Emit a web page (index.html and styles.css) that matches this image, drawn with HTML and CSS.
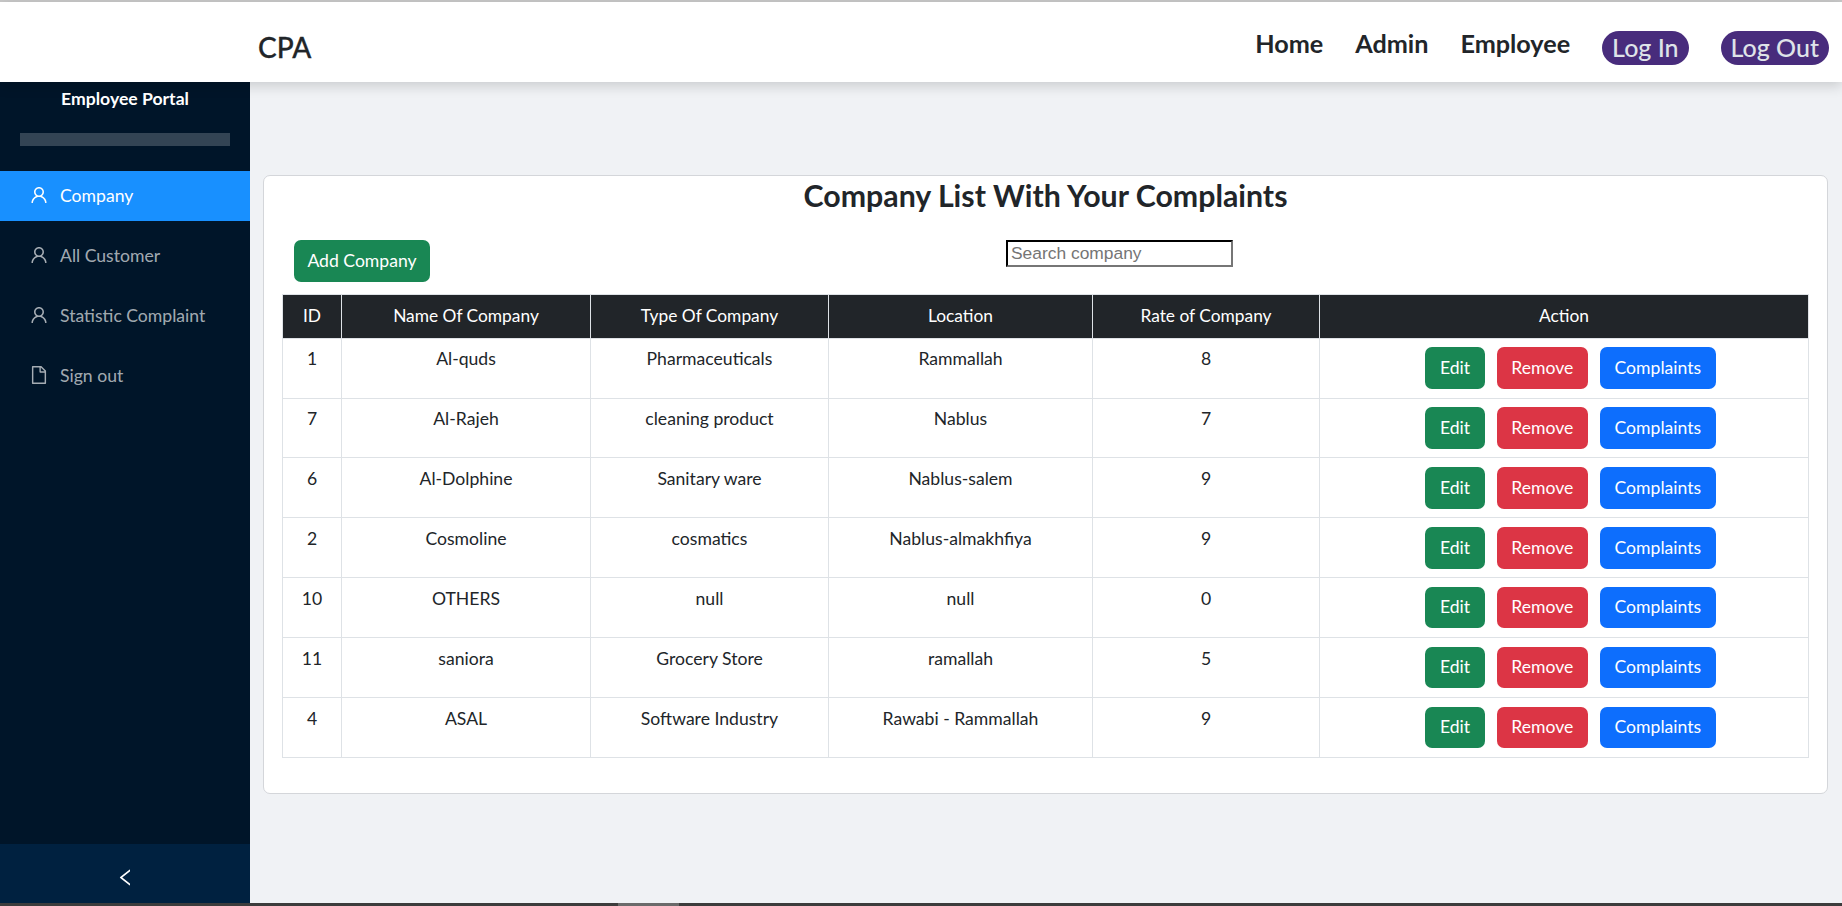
FILE: index.html
```html
<!DOCTYPE html>
<html lang="en">
<head>
<meta charset="utf-8">
<title>CPA</title>
<link rel="stylesheet" href="styles.css">
</head>
<body>
<div class="page">
  <header class="topbar">
    <span class="brand">CPA</span>
    <nav class="nav">
      <a class="nav-link">Home</a>
      <a class="nav-link">Admin</a>
      <a class="nav-link">Employee</a>
      <a class="nav-pill">Log In</a>
      <a class="nav-pill">Log Out</a>
    </nav>
  </header>
  <div class="body">
    <aside class="sider">
      <div class="sider-title">Employee Portal</div>
      <div class="sider-bar"></div>
      <ul class="menu">
        <li class="menu-item active"><svg class="menu-icon" viewBox="64 64 896 896"><path d="M858.5 763.6a374 374 0 0 0-80.6-119.5 375.63 375.63 0 0 0-119.5-80.6c-.4-.2-.8-.3-1.2-.5C719.5 518 760 444.7 760 362c0-137-111-248-248-248S264 225 264 362c0 82.7 40.5 156 102.8 201.1-.4.2-.8.3-1.2.5-44.8 18.9-85 46-119.5 80.6a375.63 375.63 0 0 0-80.6 119.5A371.7 371.7 0 0 0 136 901.8a8 8 0 0 0 8 8.2h60c4.4 0 7.9-3.5 8-7.8 2-77.2 33-149.5 87.8-204.3 56.7-56.7 132-87.9 212.2-87.9s155.5 31.2 212.2 87.9C779 752.7 810 825 812 902.2c.1 4.4 3.6 7.8 8 7.8h60a8 8 0 0 0 8-8.2c-1-47.8-10.9-94.3-29.5-138.2zM512 534c-45.9 0-89.1-17.9-121.6-50.4S340 407.9 340 362c0-45.9 17.9-89.1 50.4-121.6S466.1 190 512 190s89.1 17.9 121.6 50.4S684 316.1 684 362c0 45.9-17.9 89.1-50.4 121.6S557.9 534 512 534z"/></svg><span>Company</span></li>
        <li class="menu-item"><svg class="menu-icon" viewBox="64 64 896 896"><path d="M858.5 763.6a374 374 0 0 0-80.6-119.5 375.63 375.63 0 0 0-119.5-80.6c-.4-.2-.8-.3-1.2-.5C719.5 518 760 444.7 760 362c0-137-111-248-248-248S264 225 264 362c0 82.7 40.5 156 102.8 201.1-.4.2-.8.3-1.2.5-44.8 18.9-85 46-119.5 80.6a375.63 375.63 0 0 0-80.6 119.5A371.7 371.7 0 0 0 136 901.8a8 8 0 0 0 8 8.2h60c4.4 0 7.9-3.5 8-7.8 2-77.2 33-149.5 87.8-204.3 56.7-56.7 132-87.9 212.2-87.9s155.5 31.2 212.2 87.9C779 752.7 810 825 812 902.2c.1 4.4 3.6 7.8 8 7.8h60a8 8 0 0 0 8-8.2c-1-47.8-10.9-94.3-29.5-138.2zM512 534c-45.9 0-89.1-17.9-121.6-50.4S340 407.9 340 362c0-45.9 17.9-89.1 50.4-121.6S466.1 190 512 190s89.1 17.9 121.6 50.4S684 316.1 684 362c0 45.9-17.9 89.1-50.4 121.6S557.9 534 512 534z"/></svg><span>All Customer</span></li>
        <li class="menu-item"><svg class="menu-icon" viewBox="64 64 896 896"><path d="M858.5 763.6a374 374 0 0 0-80.6-119.5 375.63 375.63 0 0 0-119.5-80.6c-.4-.2-.8-.3-1.2-.5C719.5 518 760 444.7 760 362c0-137-111-248-248-248S264 225 264 362c0 82.7 40.5 156 102.8 201.1-.4.2-.8.3-1.2.5-44.8 18.9-85 46-119.5 80.6a375.63 375.63 0 0 0-80.6 119.5A371.7 371.7 0 0 0 136 901.8a8 8 0 0 0 8 8.2h60c4.4 0 7.9-3.5 8-7.8 2-77.2 33-149.5 87.8-204.3 56.7-56.7 132-87.9 212.2-87.9s155.5 31.2 212.2 87.9C779 752.7 810 825 812 902.2c.1 4.4 3.6 7.8 8 7.8h60a8 8 0 0 0 8-8.2c-1-47.8-10.9-94.3-29.5-138.2zM512 534c-45.9 0-89.1-17.9-121.6-50.4S340 407.9 340 362c0-45.9 17.9-89.1 50.4-121.6S466.1 190 512 190s89.1 17.9 121.6 50.4S684 316.1 684 362c0 45.9-17.9 89.1-50.4 121.6S557.9 534 512 534z"/></svg><span>Statistic Complaint</span></li>
        <li class="menu-item"><svg class="menu-icon" viewBox="64 64 896 896"><path d="M854.6 288.6L639.4 73.4c-6-6-14.1-9.4-22.6-9.4H192c-17.7 0-32 14.3-32 32v832c0 17.7 14.3 32 32 32h640c17.7 0 32-14.3 32-32V311.3c0-8.5-3.4-16.7-9.4-22.7zM790.2 326H602V137.8L790.2 326zm1.8 562H232V136h302v216a42 42 0 0 0 42 42h216v494z"/></svg><span>Sign out</span></li>
      </ul>
      <div class="sider-trigger"><svg class="trigger-icon" viewBox="64 64 896 896"><path d="M724 218.3V141c0-6.7-7.7-10.4-12.9-6.3L260.3 486.8a31.86 31.86 0 0 0 0 50.3l450.8 352.1c5.3 4.1 12.9.4 12.9-6.3v-77.3c0-4.9-2.3-9.6-6.1-12.6l-360-281 360-281.1c3.8-3 6.1-7.7 6.1-12.6z"/></svg></div>
    </aside>
    <main class="content">
      <section class="card">
        <h3 class="card-title">Company List With Your Complaints</h3>
        <div class="toolbar">
          <button class="btn btn-green btn-add">Add Company</button>
          <input class="search" type="text" placeholder="Search company">
        </div>
        <table class="table">
          <colgroup>
            <col class="c-id"><col class="c-name"><col class="c-type"><col class="c-loc"><col class="c-rate"><col class="c-act">
          </colgroup>
          <thead>
            <tr><th>ID</th><th>Name Of Company</th><th>Type Of Company</th><th>Location</th><th>Rate of Company</th><th>Action</th></tr>
          </thead>
          <tbody>
            <tr><td>1</td><td>Al-quds</td><td>Pharmaceuticals</td><td>Rammallah</td><td>8</td><td><div class="actions"><button class="btn btn-green">Edit</button><button class="btn btn-red">Remove</button><button class="btn btn-blue">Complaints</button></div></td></tr>
            <tr><td>7</td><td>Al-Rajeh</td><td>cleaning product</td><td>Nablus</td><td>7</td><td><div class="actions"><button class="btn btn-green">Edit</button><button class="btn btn-red">Remove</button><button class="btn btn-blue">Complaints</button></div></td></tr>
            <tr><td>6</td><td>Al-Dolphine</td><td>Sanitary ware</td><td>Nablus-salem</td><td>9</td><td><div class="actions"><button class="btn btn-green">Edit</button><button class="btn btn-red">Remove</button><button class="btn btn-blue">Complaints</button></div></td></tr>
            <tr><td>2</td><td>Cosmoline</td><td>cosmatics</td><td>Nablus-almakhfiya</td><td>9</td><td><div class="actions"><button class="btn btn-green">Edit</button><button class="btn btn-red">Remove</button><button class="btn btn-blue">Complaints</button></div></td></tr>
            <tr><td>10</td><td>OTHERS</td><td>null</td><td>null</td><td>0</td><td><div class="actions"><button class="btn btn-green">Edit</button><button class="btn btn-red">Remove</button><button class="btn btn-blue">Complaints</button></div></td></tr>
            <tr><td>11</td><td>saniora</td><td>Grocery Store</td><td>ramallah</td><td>5</td><td><div class="actions"><button class="btn btn-green">Edit</button><button class="btn btn-red">Remove</button><button class="btn btn-blue">Complaints</button></div></td></tr>
            <tr><td>4</td><td>ASAL</td><td>Software Industry</td><td>Rawabi - Rammallah</td><td>9</td><td><div class="actions"><button class="btn btn-green">Edit</button><button class="btn btn-red">Remove</button><button class="btn btn-blue">Complaints</button></div></td></tr>
          </tbody>
        </table>
      </section>
    </main>
  </div>
  <div class="strip"><div class="strip-thumb"></div></div>
</div>
</body>
</html>
```

FILE: styles.css
```css
* { box-sizing: border-box; }
html, body { margin: 0; height: 100%; }
body { font-family: Lato, "Noto Sans", sans-serif; font-size: 17.6px; color: #212529; background: #f0f2f5; overflow: hidden; }
.page { display: flex; flex-direction: column; height: 906px; border-top: 2px solid #c8c8c8; }
.topbar { position: relative; z-index: 2; flex: 0 0 80px; height: 80px; background: #fff; box-shadow: 0 4px 12px rgba(0,0,0,.16); display: flex; align-items: center; padding: 0 13px 0 258px; }
.brand { font-size: 28px; font-weight: 500; line-height: 1; margin-top: 10px; -webkit-text-stroke: .3px #212529; }
.nav { margin-left: auto; display: flex; align-items: center; gap: 32px; }
.nav-link { font-size: 25.2px; font-weight: 700; color: #212529; margin-top: 2px; }
.nav-pill { font-size: 25px; font-weight: 500; line-height: 32px; height: 34px; padding: 0 10px; border-radius: 17px; background: #482c7c; color: #dfe3e8; margin-top: 12px; }
.body { flex: 1; display: flex; min-height: 0; }
.sider { flex: 0 0 250px; background: #001529; display: flex; flex-direction: column; }
.sider-title { font-size: 17.6px; font-weight: 700; color: #fff; text-align: center; line-height: 24px; padding-top: 5px; }
.sider-bar { height: 13px; margin: 22px 20px 25px; background: #334454; }
.menu { list-style: none; margin: 0; padding: 0; flex: 1; }
.menu-item { height: 50px; margin-bottom: 10px; display: flex; align-items: center; padding: 0 0 2px 30px; gap: 12px; color: rgba(255,255,255,.65); font-size: 17.6px; }
.menu-item.active { background: #1890ff; color: #fff; }
.menu-icon { width: 18px; height: 18px; fill: currentColor; flex: none; }
.sider-trigger { height: 59px; padding-top: 7px; background: #002140; display: flex; align-items: center; justify-content: center; color: #fff; }
.trigger-icon { width: 19px; height: 19px; fill: currentColor; }
.content { flex: 1; min-width: 0; padding: 93px 14px 0 13px; }
.card { background: #fff; border: 1px solid #d4d6da; border-radius: 7px; padding: 0 18px; height: 619px; }
.card-title { margin: 0; font-size: 30.3px; font-weight: 700; line-height: 36px; text-align: center; padding-top: 1px; }
.toolbar { display: flex; align-items: flex-start; margin-top: 27px; height: 54px; }
.btn { font: 400 17.6px/26px Lato, "Noto Sans", sans-serif; height: 42px; padding: 0 14.6px; border: 0; border-radius: 7px; color: #fff; cursor: pointer; }
.btn-green { background: #198754; }
.btn-red { background: #dc3545; }
.btn-blue { background: #0d6efd; }
.btn-add { margin-left: 12px; flex: none; width: 136px; padding: 0; }
.search { margin-left: 576px; width: 227px; height: 27px; padding: 1px 3px; border: 2px inset #767676; border-color: #3b3b3b #767676 #767676 #3b3b3b; font: 17.4px "Liberation Sans", Arial, sans-serif; background: #fff; }
.search::placeholder { color: #757575; }
.table { width: 1526px; border-collapse: collapse; table-layout: fixed; }
.c-id { width: 59px; } .c-name { width: 249px; } .c-type { width: 238px; } .c-loc { width: 264px; } .c-rate { width: 227px; } .c-act { width: 489px; }
.table th { height: 44px; padding: 0 0 2px; font-size: 17.35px; font-weight: 400; background: #212529; color: #fff; border: 1px solid #dee2e6; text-align: center; }
.table td { height: 60px; padding: 8px; vertical-align: top; text-align: center; border: 1px solid #dee2e6; line-height: 24px; }
.table tbody tr:nth-child(2) td { height: 59px; }
.table tbody tr:nth-child(n+3) td { padding-top: 9px; padding-bottom: 7px; }
.table tbody tr:nth-child(n+5) .btn { height: 41px; padding-bottom: 1px; }
.actions { display: flex; justify-content: center; gap: 12px; padding-left: 13px; }
.strip { flex: 0 0 3px; background: #3c3c3c; position: relative; z-index: 3; }
.strip-thumb { position: absolute; left: 618px; width: 61px; top: 0; bottom: 0; background: #6a6a6a; }
```
